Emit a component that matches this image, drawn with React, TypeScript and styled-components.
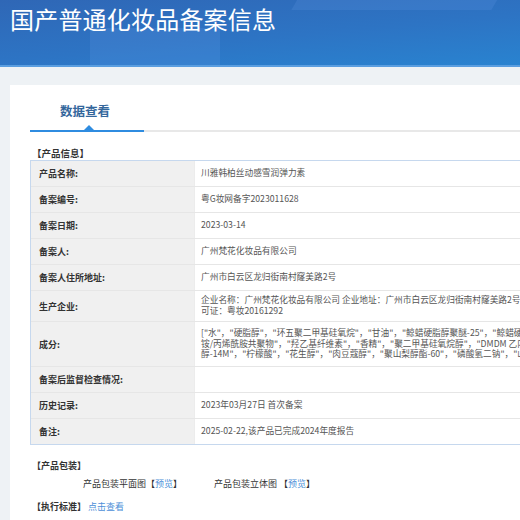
import React from 'react';
import styled, { createGlobalStyle } from 'styled-components';

const GlobalStyle = createGlobalStyle`
  html, body {
    margin: 0;
    padding: 0;
    overflow: hidden;
    background: #eef2f5;
    font-family: "Noto Sans CJK SC", "Noto Sans", sans-serif;
  }
`;

const Header = styled.header`
  position: relative;
  height: 65px;
  overflow: hidden;
  background: linear-gradient(175deg, #2f67b6 0%, #2d74c4 55%, #2983d0 100%);
  border-bottom: 2px solid #5a9ee0;
`;

const Shape = styled.div<{ $left: number; $top: number; $w: number; $h: number; $skew: number }>`
  position: absolute;
  left: ${(p) => p.$left}px;
  top: ${(p) => p.$top}px;
  width: ${(p) => p.$w}px;
  height: ${(p) => p.$h}px;
  background: rgba(120, 170, 240, 0.16);
  transform: skewX(${(p) => p.$skew}deg);
`;

const Title = styled.h1`
  position: relative;
  margin: 0;
  padding: 4px 0 0 10px;
  font-size: 24px;
  line-height: 30px;
  font-weight: 400;
  color: #fff;
  letter-spacing: 0.2px;
`;

const Main = styled.main`
  padding: 18px 0 0 10px;
`;

const Card = styled.section`
  width: 1100px;
  min-height: 460px;
  background: #fff;
  padding: 0 20px;
`;

const TabBar = styled.div`
  display: flex;
  border-bottom: 2px solid #e8e8e8;
  height: 45px;
`;

const Tab = styled.div`
  position: relative;
  width: 114px;
  display: flex;
  align-items: center;
  justify-content: center;
  padding: 6px 4px 0 0;
  box-sizing: border-box;
  font-size: 12.5px;
  font-weight: 700;
  color: #34679c;
  border-bottom: 2px solid #2f8ce0;
  margin-bottom: -2px;

  &::after {
    content: '';
    position: absolute;
    left: 54px;
    bottom: 0;
    border-left: 5px solid transparent;
    border-right: 5px solid transparent;
    border-bottom: 5px solid #2f8ce0;
  }
`;

const SectionTitle = styled.div`
  font-size: 9.5px;
  font-weight: 700;
  color: #333;
  line-height: 13px;
  margin: 15px 0 0 2px;
`;

const Table = styled.div`
  border: 1px solid #c6d8ee;
`;

const Row = styled.div`
  display: grid;
  grid-template-columns: 164px 1fr;
  border-top: 1px solid #e6e6e6;
  &:first-child {
    border-top: none;
  }
`;

const Label = styled.div`
  background: #f0f0f0;
  font-size: 9px;
  font-weight: 700;
  color: #333;
  padding: 0 8px;
  display: flex;
  align-items: center;
  border-right: 1px solid #ececec;
`;

const Value = styled.div<{ $tall?: number }>`
  font-size: 8.7px;
  color: #555;
  line-height: 10.6px;
  padding: 0 6px;
  min-height: ${(p) => p.$tall ?? 25}px;
  display: flex;
  align-items: center;
  white-space: nowrap;
`;

const Extra = styled.div`
  font-size: 9px;
  color: #333;
  line-height: 13px;
`;

const ExtraTitle = styled(Extra)`
  font-weight: 700;
  margin: 14px 0 0 2px;
`;

const PackRow = styled(Extra)`
  display: flex;
  gap: 32px;
  margin: 5px 0 0 53px;
`;

const StdRow = styled(Extra)`
  display: flex;
  gap: 2px;
  margin: 10px 0 0 2px;
  font-weight: 700;
`;

const Link = styled.span`
  color: #4d8fd8;
  font-weight: 400;
`;

const rows: { label: string; lines: string[]; tall?: number }[] = [
  { label: '产品名称:', lines: ['川雅韩柏丝动感雪润弹力素'] },
  { label: '备案编号:', lines: ['粤G妆网备字2023011628'] },
  { label: '备案日期:', lines: ['2023-03-14'] },
  { label: '备案人:', lines: ['广州梵花化妆品有限公司'] },
  { label: '备案人住所地址:', lines: ['广州市白云区龙归街南村窿美路2号'] },
  {
    label: '生产企业:',
    tall: 30,
    lines: [
      '企业名称：广州梵花化妆品有限公司 企业地址：广州市白云区龙归街南村窿美路2号 生产许',
      '可证：粤妆20161292',
    ],
  },
  {
    label: '成分:',
    tall: 44,
    lines: [
      '["水"，"硬脂醇"，"环五聚二甲基硅氧烷"，"甘油"，"鲸蜡硬脂醇聚醚-25"，"鲸蜡硬脂醇"，"聚丙烯酰基二甲基牛磺酸',
      '铵/丙烯酰胺共聚物"，"羟乙基纤维素"，"香精"，"聚二甲基硅氧烷醇"，"DMDM 乙内酰脲"，"聚乙二',
      '醇-14M"，"柠檬酸"，"花生醇"，"肉豆蔻醇"，"聚山梨醇酯-60"，"磷酸氢二钠"，"山嵛醇"]',
    ],
  },
  { label: '备案后监督检查情况:', lines: [''] },
  { label: '历史记录:', lines: ['2023年03月27日 首次备案'] },
  { label: '备注:', lines: ['2025-02-22,该产品已完成2024年度报告'] },
];

const App = (): JSX.Element => {
  return (
    <>
      <GlobalStyle />
      <Header>
        <Shape $left={90} $top={28} $w={130} $h={60} $skew={0} />
        <Shape $left={300} $top={-20} $w={200} $h={30} $skew={-30} />
        <Title>国产普通化妆品备案信息</Title>
      </Header>
      <Main>
        <Card>
          <TabBar>
            <Tab>数据查看</Tab>
          </TabBar>
          <SectionTitle>【产品信息】</SectionTitle>
          <Table>
            {rows.map((row) => (
              <Row key={row.label}>
                <Label>{row.label}</Label>
                <Value $tall={row.tall}>
                  <div>
                    {row.lines.map((line, i) => (
                      <div key={i}>{line}</div>
                    ))}
                  </div>
                </Value>
              </Row>
            ))}
          </Table>
          <ExtraTitle>【产品包装】</ExtraTitle>
          <PackRow>
            <span>
              产品包装平面图【<Link>预览</Link>】
            </span>
            <span>
              产品包装立体图 【<Link>预览</Link>】
            </span>
          </PackRow>
          <StdRow>
            <span>【执行标准】</span>
            <Link>点击查看</Link>
          </StdRow>
        </Card>
      </Main>
    </>
  );
};

export default App;
